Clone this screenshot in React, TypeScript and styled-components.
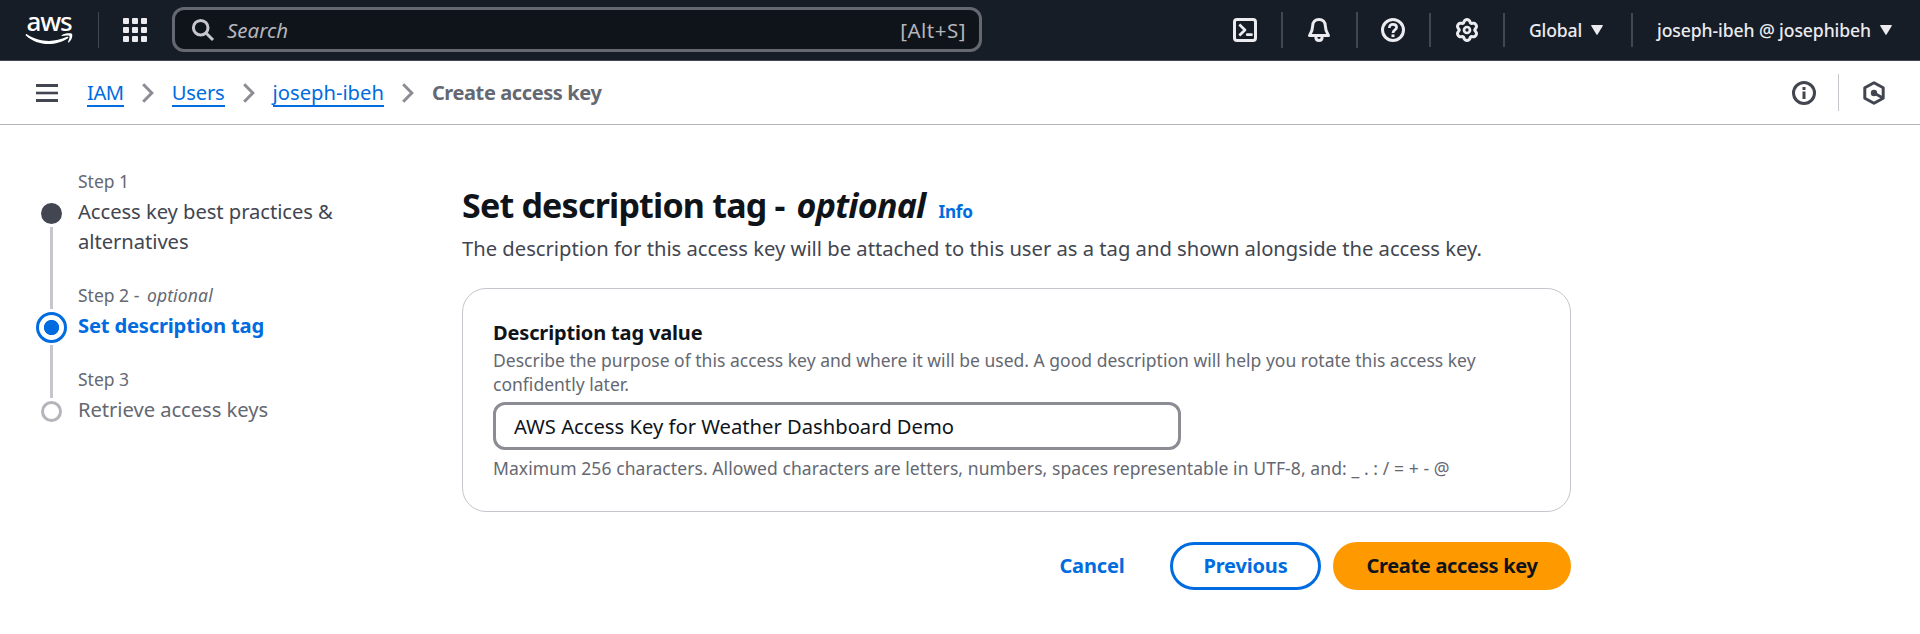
import React from 'react';
import styled, { createGlobalStyle, css } from 'styled-components';

const GlobalStyle = createGlobalStyle`
  *, *::before, *::after { box-sizing: border-box; }
  body {
    margin: 0;
    background: #ffffff;
    color: #0f141a;
    font-family: 'Noto Sans', 'Open Sans', sans-serif;
    font-size: 20.2px;
    line-height: 30px;
  }
  svg { display: block; flex: none; }
`;

/* ---------- Global navigation ---------- */

const TopNav = styled.header`
  display: flex;
  align-items: center;
  height: 61px;
  padding-bottom: 1px;
  background: #161d26;
  border-bottom: 1px solid #424650;
  color: #ebebf0;
`;

const NavDivider = styled.span<{ $width?: number; $height?: number }>`
  flex: none;
  width: ${(p) => p.$width ?? 2}px;
  height: ${(p) => p.$height ?? 34}px;
  background: #424650;
`;

const Logo = styled.a`
  display: flex;
  flex-direction: column;
  align-items: center;
  width: 48px;
  height: 36px;
  margin: 0 25px;
  color: #ffffff;
`;

const LogoWord = styled.span`
  height: 24px;
  margin-top: -3px;
  font-size: 26px;
  font-weight: 500;
  line-height: 24px;
  letter-spacing: -1.2px;
`;

const ServicesButton = styled.a`
  margin: 0 25px 0 24px;
`;

const SearchBox = styled.div`
  display: flex;
  align-items: center;
  width: 810px;
  height: 45px;
  padding: 0 13px 0 16px;
  background: #0f141a;
  border: 3px solid #656871;
  border-radius: 12px;
  color: #b4b4bb;
  font-size: 20.5px;
`;

const SearchPlaceholder = styled.span`
  flex: 1;
  margin-left: 12px;
  font-style: italic;
`;

const Shortcut = styled.span`
  letter-spacing: 0.5px;
`;

const NavActions = styled.nav`
  display: flex;
  align-items: center;
  margin-left: auto;
  padding-right: 28px;
`;

const NavIcon = styled.a<{ $width?: number }>`
  display: flex;
  justify-content: center;
  width: ${(p) => p.$width ?? 72}px;
`;

const NavMenu = styled.a<{ $spacing: number; $gap?: number }>`
  display: flex;
  align-items: center;
  gap: 9px;
  padding-left: 24px;
  margin-right: ${(p) => p.$gap ?? 0}px;
  font-size: 17.6px;
  font-weight: 500;
  letter-spacing: ${(p) => p.$spacing}px;
`;

/* ---------- Breadcrumb bar ---------- */

const CrumbBar = styled.div`
  display: flex;
  align-items: center;
  height: 64px;
  padding: 0 34px 0 36px;
  border-bottom: 1px solid #b4b4bb;
  color: #424650;
`;

const Crumbs = styled.div`
  display: flex;
  align-items: center;
  margin-left: 29px;
`;

const CrumbLink = styled.a<{ $spacing: number }>`
  height: 29px;
  margin-top: -1px;
  line-height: 29px;
  color: #006ce0;
  letter-spacing: ${(p) => p.$spacing}px;
  box-shadow: 0 -2px 0 #006ce0 inset;
`;

const Separator = styled.span`
  margin: 0 18px;
`;

const CurrentCrumb = styled.span`
  color: #656871;
  font-weight: 700;
  font-size: 20px;
  letter-spacing: -0.4px;
`;

const PageTools = styled.div`
  display: flex;
  align-items: center;
  margin-left: auto;
`;

const ToolDivider = styled.span`
  width: 1px;
  height: 37px;
  margin: 0 23px 0 22px;
  background: #c6c6cd;
`;

/* ---------- Body ---------- */

const Layout = styled.main`
  display: flex;
  padding: 0 0 0 36px;
`;

const Steps = styled.ol`
  width: 426px;
  margin: 0;
  padding: 44px 0 0;
  list-style: none;
`;

const StepItem = styled.li`
  display: flex;
`;

type StepState = 'done' | 'active' | 'todo';

const Rail = styled.div`
  display: flex;
  flex-direction: column;
  align-items: center;
  width: 31px;
  margin-right: 11px;
`;

const Connector = styled.span<{ $lead?: number; $hidden?: boolean }>`
  width: 3px;
  background: ${(p) => (p.$hidden ? 'transparent' : '#c6c6cd')};
  ${(p) => (p.$lead ? css`height: ${p.$lead}px;` : css`flex: 1;`)}
`;

const Marker = styled.span<{ $state: StepState }>`
  flex: none;
  width: 21px;
  height: 21px;
  margin: 3px 0;
  border-radius: 50%;
  ${(p) => p.$state === 'done' && css`background: #424650;`}
  ${(p) => p.$state === 'todo' && css`border: 3px solid #b4b4bb;`}
  ${(p) =>
    p.$state === 'active' &&
    css`
      width: 31px;
      height: 31px;
      margin-bottom: 2px;
      border: 3px solid #006ce0;
      background: radial-gradient(circle, #006ce0 7.2px, #ffffff 8px);
    `}
`;

const StepText = styled.div`
  width: 276px;
  padding-bottom: 27px;
`;

const StepLabel = styled.div`
  margin-bottom: 3px;
  color: #656871;
  font-size: 17.5px;
  line-height: 24px;

  em {
    margin-left: 3px;
    letter-spacing: 0.15px;
  }
`;

const StepTitle = styled.div<{ $state: StepState }>`
  color: #424650;
  letter-spacing: -0.05px;
  ${(p) => p.$state === 'todo' && css`color: #656871;`}
  ${(p) =>
    p.$state === 'active' &&
    css`
      color: #006ce0;
      font-weight: 700;
      letter-spacing: -0.2px;
    `}
`;

const Content = styled.section`
  width: 1109px;
  padding-top: 58px;
`;

const Title = styled.h1`
  display: flex;
  align-items: baseline;
  height: 45px;
  margin: 0 0 5px;
  font-size: 34px;
  font-weight: 700;
  line-height: 45px;
  letter-spacing: -0.8px;
  white-space: pre;

  em {
    margin-left: 4px;
    letter-spacing: -0.75px;
  }
`;

const InfoLink = styled.a`
  margin-left: 13px;
  color: #006ce0;
  font-size: 17.2px;
  line-height: 24px;
  letter-spacing: -0.3px;
`;

const Subtitle = styled.p`
  margin: 0 0 25px;
  color: #424650;
`;

const Card = styled.div`
  padding: 29px 30px;
  height: 224px;
  border: 1px solid #c6c6cd;
  border-radius: 24px;
`;

const FieldLabel = styled.label`
  display: block;
  font-size: 20px;
  font-weight: 700;
  letter-spacing: -0.15px;
`;

const Hint = styled.p<{ $spacing: number }>`
  margin: 0 0 6px;
  color: #656871;
  font-size: 17.5px;
  line-height: 24px;
  letter-spacing: ${(p) => p.$spacing}px;
`;

const TextInput = styled.input`
  display: block;
  width: 688px;
  height: 48px;
  margin-bottom: 6px;
  padding: 0 18px;
  border: 3px solid #8c8c94;
  border-radius: 12px;
  outline: none;
  color: #0f141a;
  font: inherit;
`;

const Actions = styled.div`
  display: flex;
  justify-content: flex-end;
  gap: 12px;
  margin-top: 30px;
`;

const Button = styled.button<{ $kind: 'link' | 'normal' | 'primary' }>`
  height: 48px;
  padding: 0 0 1px;
  border: 3px solid transparent;
  border-radius: 24px;
  background: transparent;
  color: #006ce0;
  font: inherit;
  font-size: 20px;
  font-weight: 700;
  letter-spacing: -0.15px;
  ${(p) => p.$kind === 'link' && css`width: 132px;`}
  ${(p) =>
    p.$kind === 'normal' &&
    css`
      width: 151px;
      border-color: #006ce0;
    `}
  ${(p) =>
    p.$kind === 'primary' &&
    css`
      width: 238px;
      background: #ff9900;
      border-color: #ff9900;
      color: #0f141a;
      letter-spacing: -0.3px;
    `}
`;

/* ---------- Icons ---------- */

const Smile = () => (
  <svg width="48" height="12" viewBox="0 0 48 12" fill="#fff">
    <path d="M1 1.2 C0.4 1.7 0.6 2.2 1.2 2.7 C7 8 15 11 23.5 11 C30 11 37.500 9 43 5.200 C44 4.400 43.200 3.300 42 3.800 C36 6.500 30 7.900 24 7.900 C16 7.900 8.500 5.500 2.200 1.500 C1.700 1.100 1.300 1 1 1.200 Z" />
    <path d="M36.700 2.300 C39.500 0.200 44.500 0 47 0.700 C48 3 46.500 7.500 43.800 9.400 C43.300 9.800 42.800 9.500 43 8.900 C43.800 7 45 4.400 44.500 3 C43.500 2.100 39.500 2.700 37.300 3 C36.600 3.100 36.300 2.700 36.700 2.300 Z" />
  </svg>
);

const GridIcon = () => (
  <svg width="24" height="24" viewBox="0 0 24 24" fill="#ebebf0">
    {[0, 9, 18].map((y) => [0, 9, 18].map((x) => <rect key={`${x}-${y}`} x={x} y={y} width="6" height="6" rx="1" />))}
  </svg>
);

const SearchIcon = () => (
  <svg width="24" height="24" viewBox="0 0 24 24" fill="none" stroke="#c6c6cd" strokeWidth="3">
    <circle cx="9.700" cy="9.700" r="7.300" />
    <path d="M15 15 L22 22" />
  </svg>
);

const TerminalIcon = () => (
  <svg width="24" height="24" viewBox="0 0 24 24" fill="none" stroke="#ebebf0" strokeWidth="3" strokeLinejoin="round">
    <rect x="1.500" y="1.500" width="21" height="21" rx="2.500" />
    <path d="M6.300 6.500 L12 12 L6.300 17.500" strokeWidth="2.700" />
    <path d="M14.200 16.700 H18.500" strokeWidth="2.700" strokeLinecap="round" />
  </svg>
);

const BellIcon = () => (
  <svg width="24" height="24" viewBox="0 0 24 24" fill="none" stroke="#ebebf0" strokeWidth="3" strokeLinejoin="round">
    <path d="M12 1.500 C8 1.500 5.700 4.300 5.700 7.800 C5.700 12 4.500 14.500 2.500 17.500 H21.500 C19.500 14.500 18.300 12 18.300 7.800 C18.300 4.300 16 1.500 12 1.500 Z" />
    <path d="M8.800 18.500 C8.800 21 10 22.500 12 22.500 C14 22.500 15.200 21 15.200 18.500" />
  </svg>
);

const HelpIcon = () => (
  <svg width="24" height="24" viewBox="0 0 24 24" fill="none" stroke="#ebebf0" strokeWidth="3">
    <circle cx="12" cy="12" r="10.500" />
    <path d="M8.400 10 C8.200 7.300 9.700 6.300 12 6.300 C14.200 6.300 15.600 7.500 15.600 9.300 C15.600 12 12 11.800 12 15" strokeWidth="2.700" />
    <path d="M12 16.400 V19.100" strokeWidth="3" />
  </svg>
);

const gearOutline =
  Array.from({ length: 72 }, (_, i) => {
    const a = (i * Math.PI) / 36;
    const r = 9.3 + 1.35 * Math.cos(6 * a) - 0.25 * Math.cos(12 * a);
    return `${i ? 'L' : 'M'}${(12 + r * Math.sin(a)).toFixed(2)} ${(12 - r * Math.cos(a)).toFixed(2)}`;
  }).join(' ') + ' Z';

const GearIcon = () => (
  <svg width="24" height="24" viewBox="0 0 24 24" fill="none" stroke="#ebebf0" strokeWidth="3" strokeLinejoin="round">
    <path d={gearOutline} />
    <circle cx="12" cy="12" r="3" strokeWidth="2.700" />
  </svg>
);

const Caret = () => (
  <svg width="12" height="10" viewBox="0 0 12 10" fill="#ebebf0">
    <path d="M0.700 0 H11.300 Q12.200 0 11.700 0.900 L6.700 9.300 Q6 10.300 5.300 9.300 L0.300 0.900 Q-0.200 0 0.700 0 Z" />
  </svg>
);

const MenuIcon = () => (
  <svg width="22" height="18" viewBox="0 0 22 18" fill="#424650">
    <rect width="22" height="3" />
    <rect y="7.700" width="22" height="2.600" />
    <rect y="15" width="22" height="3" />
  </svg>
);

const Chevron = () => (
  <svg width="12" height="20" viewBox="0 0 12 20" fill="none" stroke="#8c8c94" strokeWidth="3">
    <path d="M1.200 1.200 L9.800 10 L1.200 18.800" />
  </svg>
);

const InfoIcon = () => (
  <svg width="24" height="24" viewBox="0 0 24 24" fill="none" stroke="#424650" strokeWidth="3">
    <circle cx="12" cy="12" r="10.500" />
    <path d="M12 6 V9 M12 10.500 V18" />
  </svg>
);

const HexIcon = () => (
  <svg width="24" height="24" viewBox="0 0 24 24" fill="none" stroke="#424650" strokeWidth="3">
    <path d="M12 1.700 L21.200 6.700 V17.300 L12 22.300 L2.800 17.300 V6.700 Z" strokeLinejoin="round" />
    <circle cx="12" cy="12" r="3.200" fill="#424650" stroke="none" />
    <path d="M12 12 L20.500 16.700" strokeWidth="2.700" />
  </svg>
);

/* ---------- Data ---------- */

interface Step {
  label: string;
  optional?: boolean;
  title: string;
  state: StepState;
}

const steps: Step[] = [
  { label: 'Step 1', title: 'Access key best practices & alternatives', state: 'done' },
  { label: 'Step 2', optional: true, title: 'Set description tag', state: 'active' },
  { label: 'Step 3', title: 'Retrieve access keys', state: 'todo' },
];

const crumbs = [
  { text: 'IAM', spacing: -0.45 },
  { text: 'Users', spacing: -0.2 },
  { text: 'joseph-ibeh', spacing: 0 },
];

export default function App() {
  return (
    <>
      <GlobalStyle />
      <TopNav>
        <Logo>
          <LogoWord>aws</LogoWord>
          <Smile />
        </Logo>
        <NavDivider $width={1} $height={36} />
        <ServicesButton>
          <GridIcon />
        </ServicesButton>
        <SearchBox>
          <SearchIcon />
          <SearchPlaceholder>Search</SearchPlaceholder>
          <Shortcut>[Alt+S]</Shortcut>
        </SearchBox>
        <NavActions>
          <NavIcon><TerminalIcon /></NavIcon>
          <NavDivider $height={36} />
          <NavIcon $width={73}><BellIcon /></NavIcon>
          <NavDivider $height={36} />
          <NavIcon $width={71}><HelpIcon /></NavIcon>
          <NavDivider />
          <NavIcon><GearIcon /></NavIcon>
          <NavDivider />
          <NavMenu $spacing={-0.15} $gap={28}>Global <Caret /></NavMenu>
          <NavDivider />
          <NavMenu $spacing={-0.1}>joseph-ibeh @ josephibeh <Caret /></NavMenu>
        </NavActions>
      </TopNav>

      <CrumbBar>
        <MenuIcon />
        <Crumbs>
          {crumbs.map((c) => (
            <React.Fragment key={c.text}>
              <CrumbLink $spacing={c.spacing}>{c.text}</CrumbLink>
              <Separator><Chevron /></Separator>
            </React.Fragment>
          ))}
          <CurrentCrumb>Create access key</CurrentCrumb>
        </Crumbs>
        <PageTools>
          <InfoIcon />
          <ToolDivider />
          <HexIcon />
        </PageTools>
      </CrumbBar>

      <Layout>
        <Steps>
          {steps.map((s, i) => (
            <StepItem key={s.label}>
              <Rail>
                <Connector $lead={s.state === 'active' ? 26 : 31} $hidden={i === 0} />
                <Marker $state={s.state} />
                <Connector $hidden={i === steps.length - 1} />
              </Rail>
              <StepText>
                <StepLabel>
                  {s.label}
                  {s.optional && <> - <em>optional</em></>}
                </StepLabel>
                <StepTitle $state={s.state}>{s.title}</StepTitle>
              </StepText>
            </StepItem>
          ))}
        </Steps>

        <Content>
          <Title>
            <span>Set description tag - <em>optional</em></span>
            <InfoLink>Info</InfoLink>
          </Title>
          <Subtitle>
            The description for this access key will be attached to this user as a tag and shown alongside the access key.
          </Subtitle>
          <Card>
            <FieldLabel htmlFor="tag">Description tag value</FieldLabel>
            <Hint $spacing={0.01}>
              Describe the purpose of this access key and where it will be used. A good description will help you rotate this access key confidently later.
            </Hint>
            <TextInput id="tag" defaultValue="AWS Access Key for Weather Dashboard Demo" />
            <Hint $spacing={0.085}>Maximum 256 characters. Allowed characters are letters, numbers, spaces representable in UTF-8, and: _ . : / = + - @</Hint>
          </Card>
          <Actions>
            <Button $kind="link">Cancel</Button>
            <Button $kind="normal">Previous</Button>
            <Button $kind="primary">Create access key</Button>
          </Actions>
        </Content>
      </Layout>
    </>
  );
}
